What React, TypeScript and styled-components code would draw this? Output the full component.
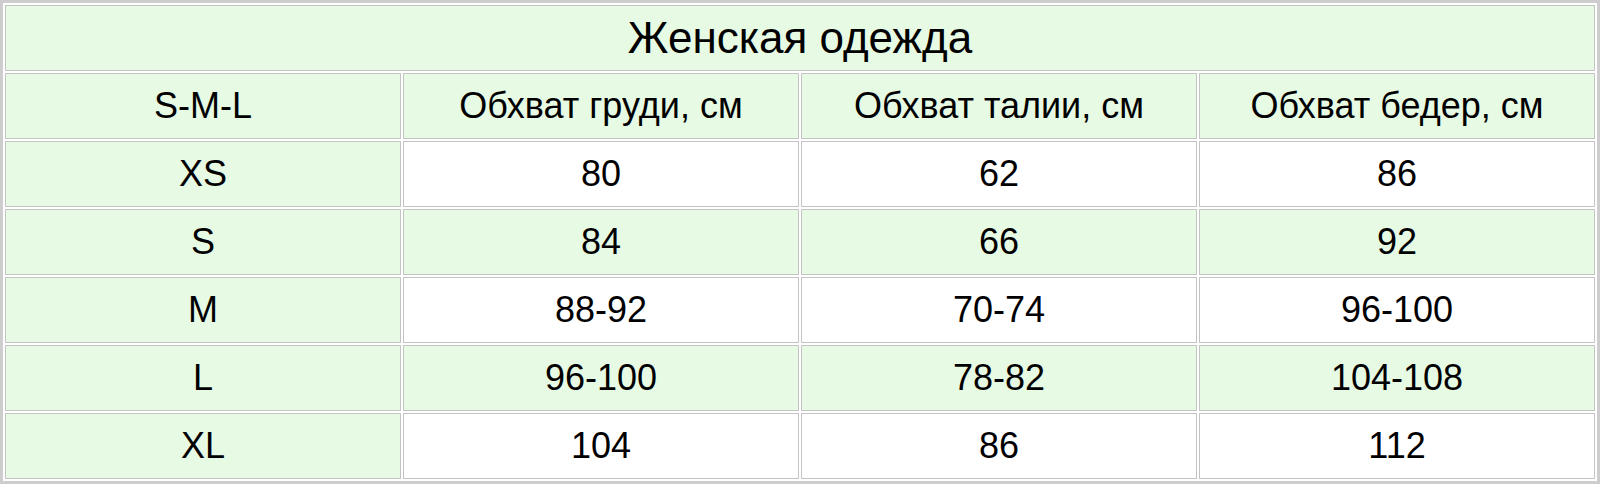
import React from "react";
import styled, { createGlobalStyle } from "styled-components";

const Global = createGlobalStyle`
  html, body { margin: 0; padding: 0; background: #ffffff; overflow: hidden; }
  body { font-family: "Liberation Sans", Arial, sans-serif; }
`;

const Table = styled.table`
  width: 100%;
  box-sizing: border-box;
  border: 3px solid #cdcdcd;
  border-spacing: 2px;
  border-collapse: separate;
  table-layout: fixed;
  font-family: "Liberation Sans", Arial, sans-serif;
  color: #000;
`;

const Cell = styled.td<{ $green?: boolean; $title?: boolean }>`
  height: 64px;
  padding: 0;
  border: 1px solid #c4c4c4;
  background: ${(p) => (p.$green ? "#e7fae4" : "#ffffff")};
  text-align: center;
  vertical-align: middle;
  line-height: 1.1;
  font-size: ${(p) => (p.$title ? "44px" : "36px")};
`;

const header = ["S-M-L", "Обхват груди, см", "Обхват талии, см", "Обхват бедер, см"];
const rows = [
  ["XS", "80", "62", "86"],
  ["S", "84", "66", "92"],
  ["M", "88-92", "70-74", "96-100"],
  ["L", "96-100", "78-82", "104-108"],
  ["XL", "104", "86", "112"],
];

export default function App() {
  return (
    <>
      <Global />
      <Table>
        <tbody>
          <tr>
            <Cell $green $title colSpan={4}>
              Женская одежда
            </Cell>
          </tr>
          <tr>
            {header.map((h) => (
              <Cell key={h} $green>
                {h}
              </Cell>
            ))}
          </tr>
          {rows.map((r, i) => (
            <tr key={r[0]}>
              {r.map((v, j) => (
                <Cell key={j} $green={j === 0 || i % 2 === 1}>
                  {v}
                </Cell>
              ))}
            </tr>
          ))}
        </tbody>
      </Table>
    </>
  );
}
